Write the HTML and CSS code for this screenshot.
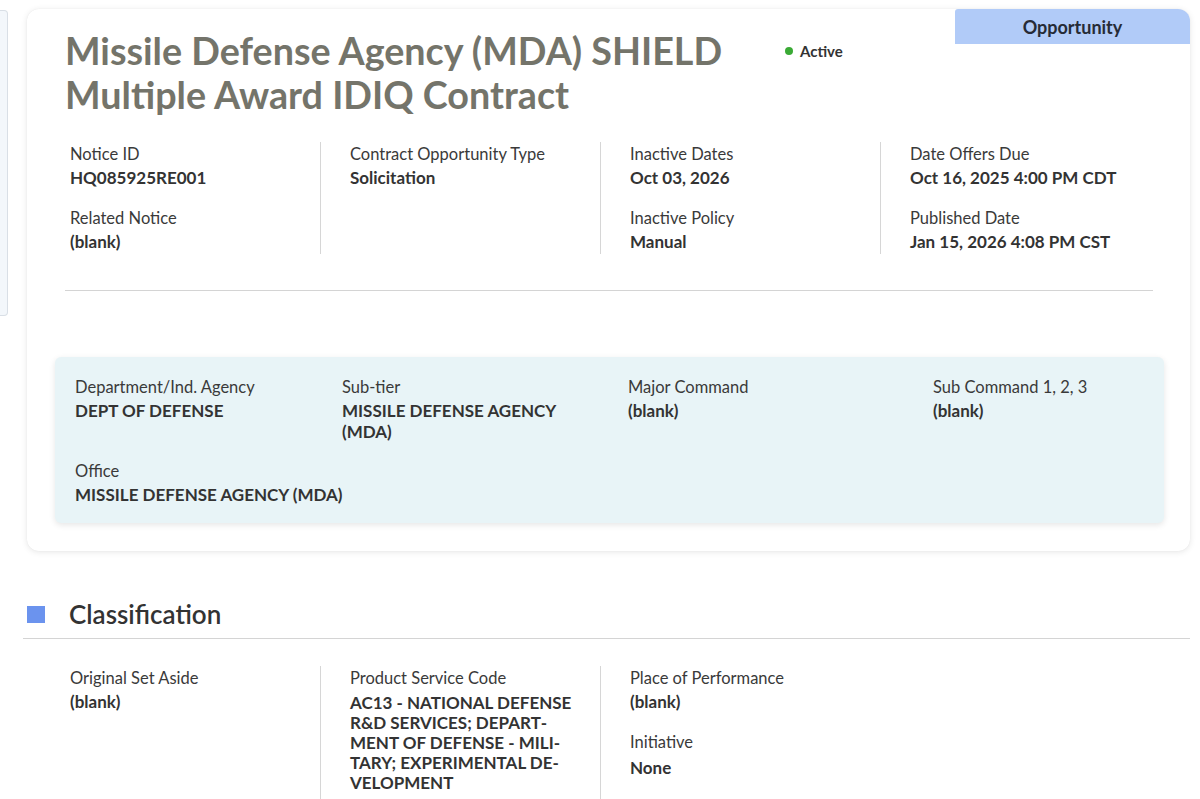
FILE: index.html
```html
<!DOCTYPE html>
<html lang="en">
<head>
<meta charset="utf-8">
<title>Missile Defense Agency (MDA) SHIELD</title>
<link rel="stylesheet" href="styles.css">
</head>
<body>
<div class="layout">
  <aside class="sidebar"></aside>
  <main class="main">
    <section class="card">
      <div class="tab">Opportunity</div>
      <div class="head">
        <h1 class="title">Missile Defense Agency (MDA) SHIELD<br>Multiple Award IDIQ Contract</h1>
        <div class="status"><span class="dot"></span>Active</div>
      </div>
      <div class="grid">
        <div class="col">
          <div class="field"><div class="label">Notice ID</div><div class="value">HQ085925RE001</div></div>
          <div class="field"><div class="label">Related Notice</div><div class="value">(blank)</div></div>
        </div>
        <div class="col">
          <div class="field"><div class="label">Contract Opportunity Type</div><div class="value">Solicitation</div></div>
        </div>
        <div class="col">
          <div class="field"><div class="label">Inactive Dates</div><div class="value">Oct 03, 2026</div></div>
          <div class="field"><div class="label">Inactive Policy</div><div class="value">Manual</div></div>
        </div>
        <div class="col last">
          <div class="field"><div class="label">Date Offers Due</div><div class="value">Oct 16, 2025 4:00 PM CDT</div></div>
          <div class="field"><div class="label">Published Date</div><div class="value">Jan 15, 2026 4:08 PM CST</div></div>
        </div>
      </div>
      <hr class="rule">
      <div class="agency">
        <div class="field"><div class="label">Department/Ind. Agency</div><div class="value">DEPT OF DEFENSE</div></div>
        <div class="field"><div class="label">Sub-tier</div><div class="value narrow">MISSILE DEFENSE AGENCY (MDA)</div></div>
        <div class="field"><div class="label">Major Command</div><div class="value">(blank)</div></div>
        <div class="field"><div class="label">Sub Command 1, 2, 3</div><div class="value">(blank)</div></div>
        <div class="field wide"><div class="label">Office</div><div class="value">MISSILE DEFENSE AGENCY (MDA)</div></div>
      </div>
    </section>

    <section class="section">
      <div class="section-head"><span class="square"></span><h2>Classification</h2></div>
      <div class="grid grid2">
        <div class="col">
          <div class="field"><div class="label">Original Set Aside</div><div class="value">(blank)</div></div>
        </div>
        <div class="col">
          <div class="field"><div class="label">Product Service Code</div><div class="value psc">AC13 - NATIONAL DEFENSE R&amp;D SERVICES; DEPART&shy;MENT OF DEFENSE - MILI&shy;TARY; EXPERIMENTAL DE&shy;VELOPMENT</div></div>
        </div>
        <div class="col last">
          <div class="field"><div class="label">Place of Performance</div><div class="value">(blank)</div></div>
          <div class="field"><div class="label">Initiative</div><div class="value initiative">None</div></div>
        </div>
      </div>
    </section>
  </main>
</div>
</body>
</html>
```

FILE: styles.css
```css
* { box-sizing: border-box; }
html, body { margin: 0; padding: 0; background: #ffffff; }
body {
  font-family: Lato, "Liberation Sans", sans-serif;
  color: #333333;
  width: 1200px;
  height: 799px;
  overflow: hidden;
}
.layout { display: flex; align-items: flex-start; }
.sidebar {
  flex: 0 0 8px;
  height: 306px;
  margin-top: 10px;
  background: #f3f7fb;
  border: 1px solid #d9dfe6;
  border-left: none;
  border-radius: 0 4px 4px 0;
}
.main { flex: 1; padding: 9px 10px 0 19px; }
.card {
  position: relative;
  background: #fff;
  border-radius: 12px;
  box-shadow: 0 1px 6px rgba(0,0,0,0.10), 0 0 1px rgba(0,0,0,0.08);
  padding: 20px 27px 28px 14px;
}
.tab {
  position: absolute;
  top: 0;
  right: 0;
  width: 235px;
  height: 35px;
  background: #b1cbf8;
  border-radius: 3px 12px 0 0;
  color: #262b36;
  font-weight: 700;
  font-size: 18px;
  display: flex;
  align-items: center;
  justify-content: center;
}
.head { display: flex; align-items: flex-start; padding-left: 24px; }
.title {
  margin: 0;
  font-size: 37.7px;
  line-height: 44px;
  font-weight: 700;
  color: #74746a;
  width: 720px;
}
.status {
  display: flex;
  align-items: center;
  margin-top: 13px;
  font-size: 15px;
  font-weight: 700;
  color: #333;
}
.dot {
  width: 8px; height: 8px; border-radius: 50%;
  background: #3aaa35;
  margin-right: 7px;
}
.grid {
  display: grid;
  grid-template-columns: repeat(4, 280px);
  margin-top: 25px;
}
.col {
  padding-left: 29px;
  border-right: 1px solid #d6d6d6;
}
.col.last { border-right: none; }
.field { margin-bottom: 16px; }
.col .field:last-child { margin-bottom: 0; }
.label { font-size: 16.5px; line-height: 24px; color: #3a3a3a; }
.value { font-size: 17px; line-height: 24px; font-weight: 700; color: #333; }
.rule {
  border: none;
  border-top: 1px solid #d4d4d4;
  margin: 36px 10px 0 24px;
}
.agency {
  margin: 66px -1px 0 14px;
  background: #e8f4f7;
  border-radius: 6px;
  box-shadow: 0 2px 6px rgba(0,0,0,0.10);
  padding: 18px 20px 18px 20px;
  display: grid;
  grid-template-columns: 267px 286px 305px 1fr;
  row-gap: 17px;
}
.agency .field { margin: 0; }
.agency .value { line-height: 21px; margin-top: 1px; }
.narrow { width: 240px; }
.wide { grid-column: 1 / -1; }
.section { margin-top: 45px; }
.section-head {
  display: flex;
  align-items: center;
  padding: 2px 0 8px 4px;
  border-bottom: 1px solid #d4d4d4;
  margin-left: -4px;
}
.square { width: 18px; height: 17px; background: #6b93ee; margin-right: 24px; }
.section-head h2 { margin: 0; font-size: 26px; line-height: 32px; font-weight: 600; color: #333; }
.grid2 { margin-top: 27px; margin-left: 14px; }
.grid2 .col { height: 140px; }
.grid2 .field { margin-bottom: 16px; }
.psc { width: 226px; line-height: 20px; hyphens: manual; margin-top: 3px; }
.initiative { margin-top: 2px; }
```
